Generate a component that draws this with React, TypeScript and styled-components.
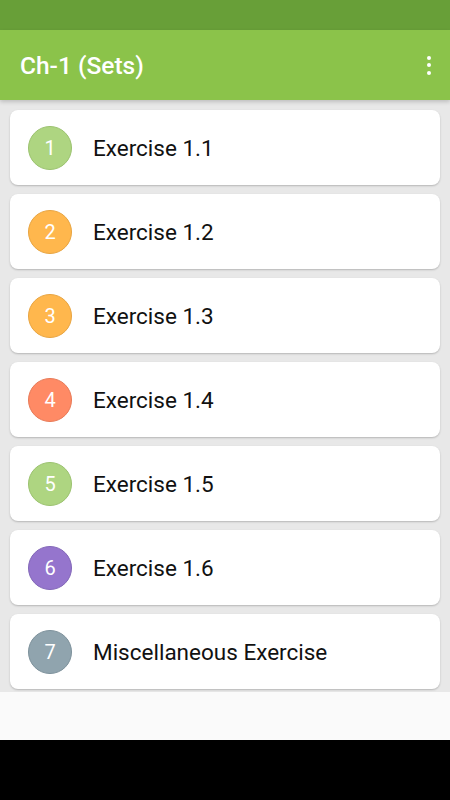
import styled, { createGlobalStyle } from "styled-components";

const GlobalStyle = createGlobalStyle`
  html, body {
    margin: 0;
    padding: 0;
    background: #000;
  }
  body {
    font-family: Roboto, "Noto Sans", "Liberation Sans", sans-serif;
  }
`;

interface IExercise {
  num: number;
  title: string;
  color: string;
  border: string;
}

const exercises: IExercise[] = [
  { num: 1, title: "Exercise 1.1", color: "#aed581", border: "#9bc26f" },
  { num: 2, title: "Exercise 1.2", color: "#ffb74d", border: "#e8a440" },
  { num: 3, title: "Exercise 1.3", color: "#ffb74d", border: "#e8a440" },
  { num: 4, title: "Exercise 1.4", color: "#ff8a65", border: "#e87a57" },
  { num: 5, title: "Exercise 1.5", color: "#aed581", border: "#9bc26f" },
  { num: 6, title: "Exercise 1.6", color: "#9575cd", border: "#8267b8" },
  { num: 7, title: "Miscellaneous Exercise", color: "#90a4ae", border: "#7d919b" },
];

function App() {
  return (
    <Screen>
      <GlobalStyle />
      <StatusBar />
      <Toolbar>
        <span className="title">Ch-1 (Sets)</span>
        <MenuButton aria-label="more">
          <i />
          <i />
          <i />
        </MenuButton>
      </Toolbar>
      <List>
        {exercises.map(ex => (
          <Card key={ex.num}>
            <Badge color={ex.color} $border={ex.border}>
              {ex.num}
            </Badge>
            <span className="label">{ex.title}</span>
          </Card>
        ))}
      </List>
      <BottomArea />
      <NavBar />
    </Screen>
  );
}

const Screen = styled.div`
  width: 450px;
  height: 800px;
  display: flex;
  flex-direction: column;
  overflow: hidden;
`;

const StatusBar = styled.div`
  height: 30px;
  background: #689f38;
  flex-shrink: 0;
`;

const Toolbar = styled.div`
  height: 70px;
  flex-shrink: 0;
  background: #8bc34a;
  display: flex;
  align-items: center;
  justify-content: space-between;
  padding: 0 20px;
  box-sizing: border-box;
  box-shadow: 0 2px 4px rgba(0, 0, 0, 0.18);
  position: relative;
  z-index: 1;
  & > .title {
    color: #fff;
    font-size: 24.5px;
    font-weight: 500;
    margin-top: 1px;
  }
`;

const MenuButton = styled.div`
  width: 4px;
  display: flex;
  flex-direction: column;
  gap: 3.5px;
  margin-right: -1px;
  & > i {
    width: 4px;
    height: 4px;
    border-radius: 50%;
    background: #fff;
  }
`;

const List = styled.div`
  height: 592px;
  flex-shrink: 0;
  background: #e8e8e8;
  padding: 10px 10px 0;
  box-sizing: border-box;
  display: flex;
  flex-direction: column;
  gap: 9px;
  overflow: hidden;
`;

const Card = styled.div`
  height: 75px;
  flex-shrink: 0;
  background: #fff;
  border-radius: 8px;
  box-shadow: 0 1px 2px rgba(0, 0, 0, 0.22);
  display: flex;
  align-items: center;
  padding-left: 18px;
  & > .label {
    margin-left: 21px;
    font-size: 22.5px;
    color: #111;
    margin-top: 1px;
  }
`;

const Badge = styled.div<{ color: string; $border: string }>`
  width: 44px;
  height: 44px;
  border-radius: 50%;
  background: ${p => p.color};
  border: 1px solid ${p => p.$border};
  box-sizing: border-box;
  color: #fff;
  font-size: 20px;
  display: flex;
  align-items: center;
  justify-content: center;
  flex-shrink: 0;
`;

const BottomArea = styled.div`
  height: 48px;
  flex-shrink: 0;
  background: #fafafa;
`;

const NavBar = styled.div`
  flex: 1;
  background: #000;
`;

export default App;
